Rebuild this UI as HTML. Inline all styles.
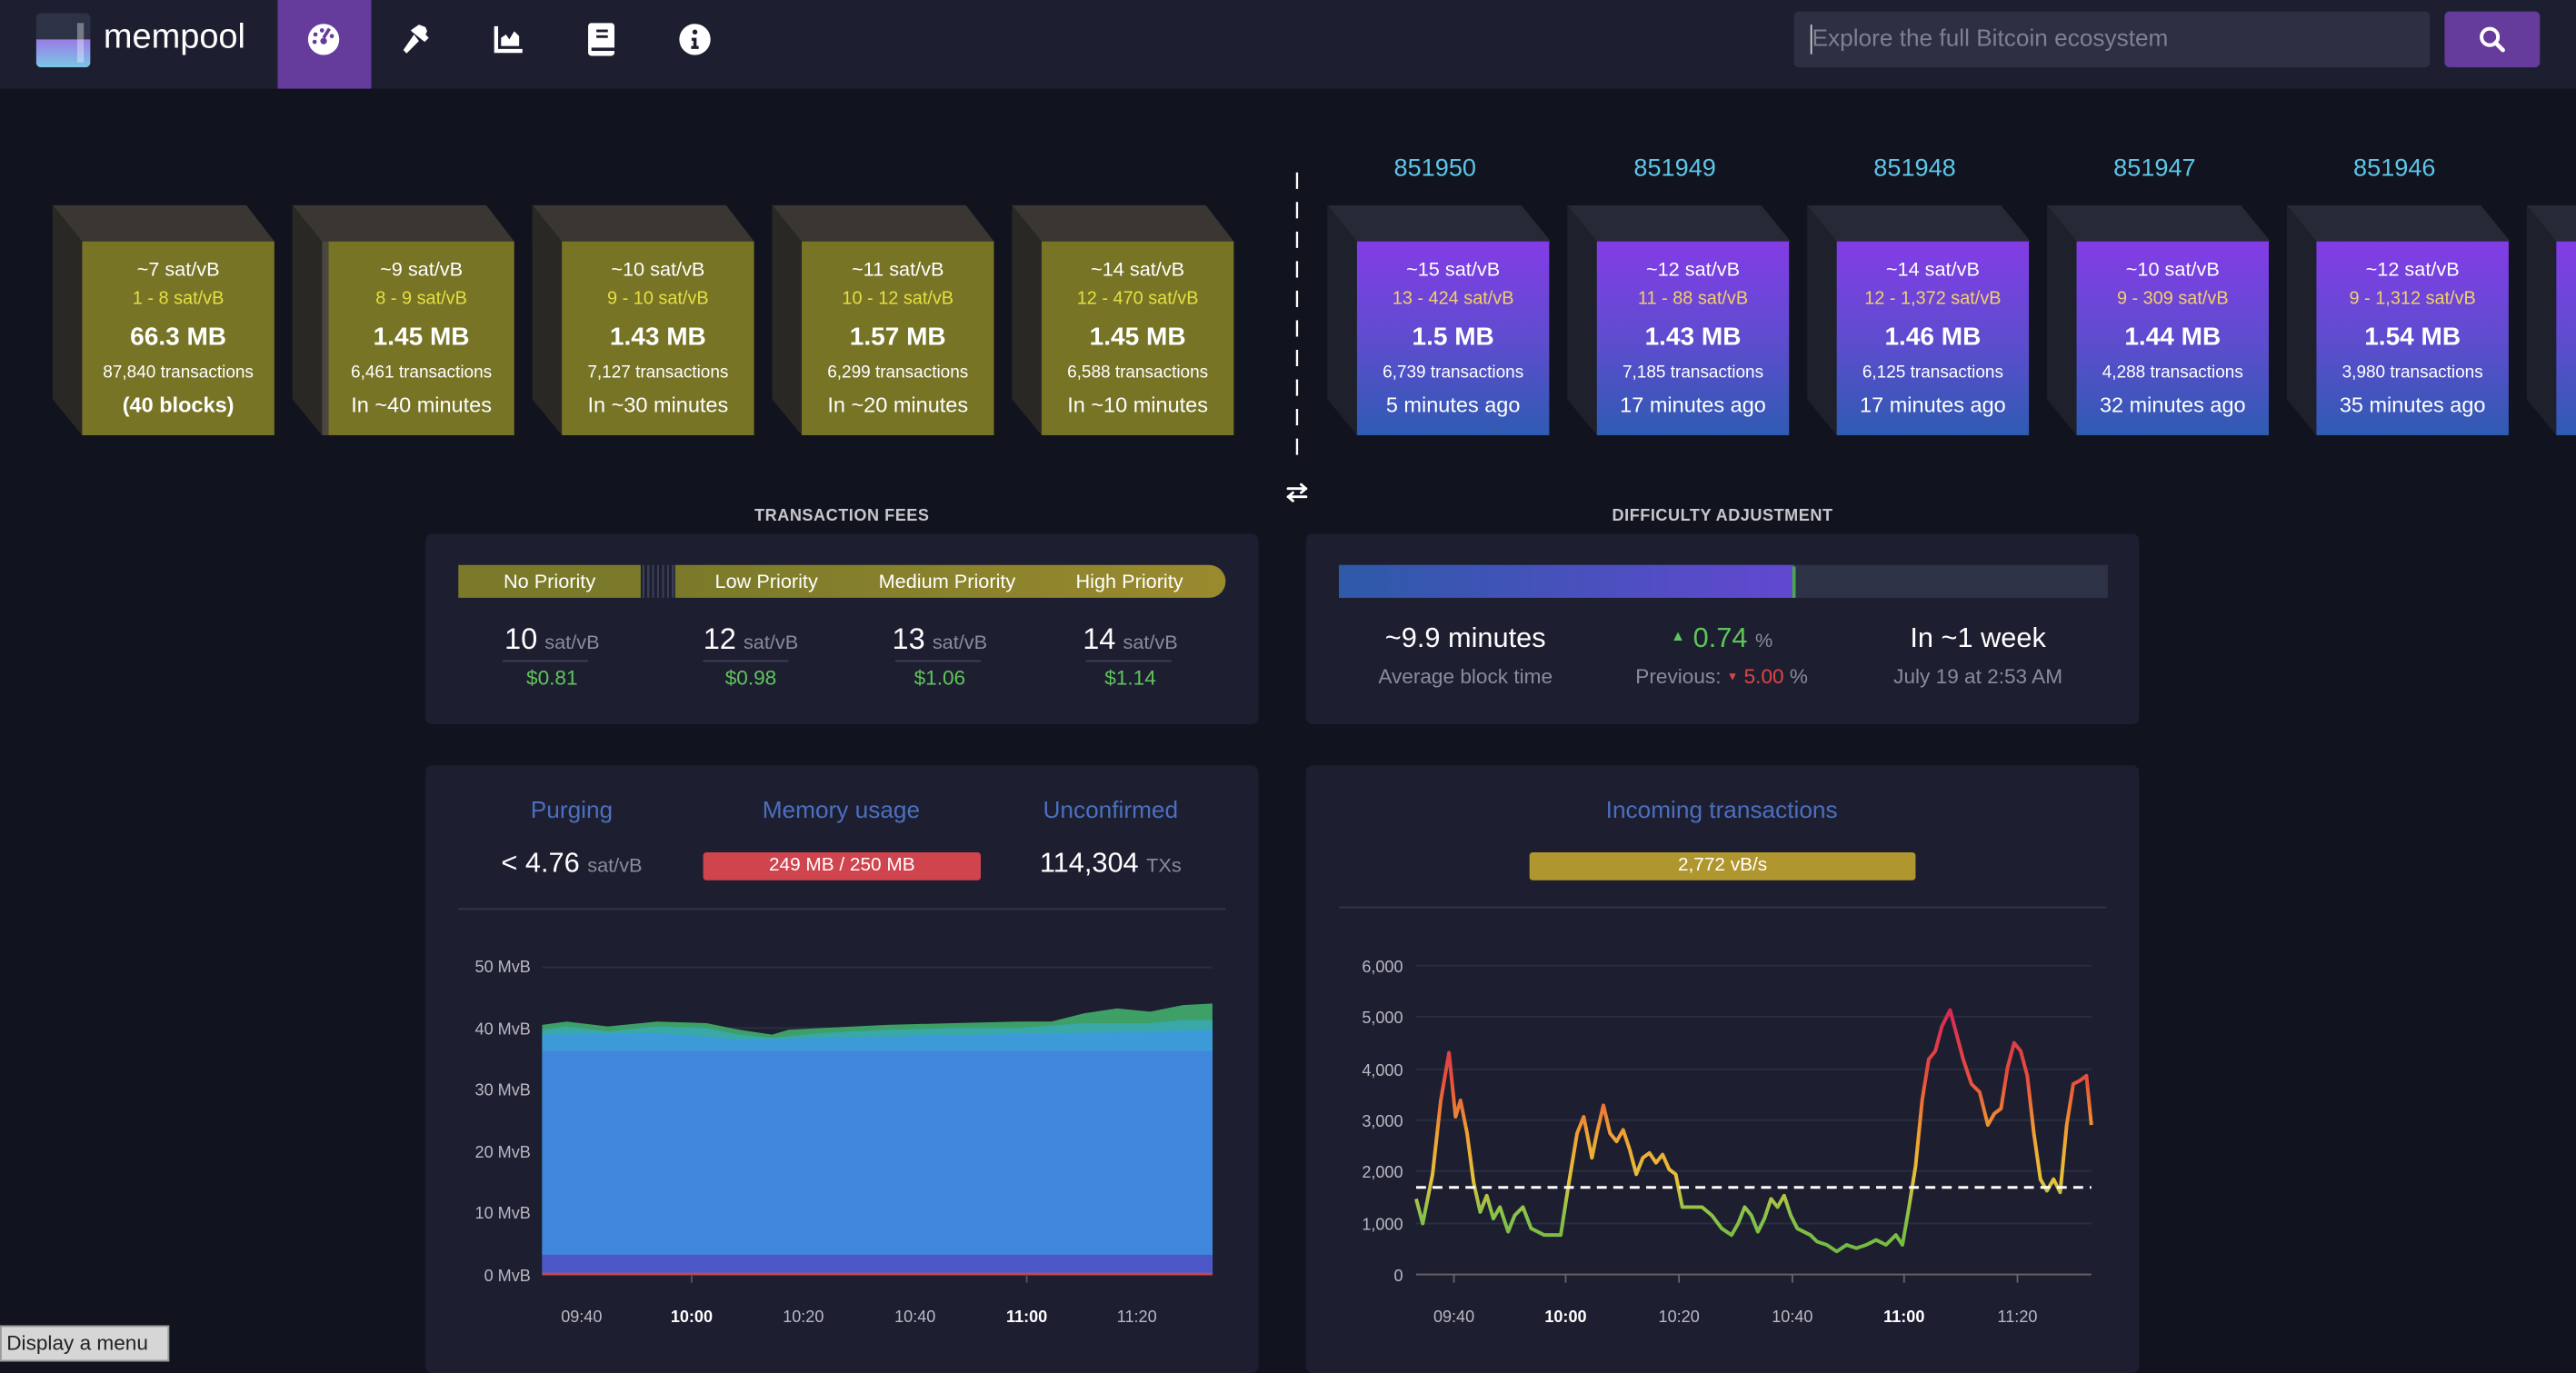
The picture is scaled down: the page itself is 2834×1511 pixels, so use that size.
<!DOCTYPE html>
<html><head><meta charset="utf-8"><style>
*{margin:0;padding:0;box-sizing:border-box}
html,body{width:2834px;height:1500px;overflow:hidden;background:#11131f;font-family:"Liberation Sans",sans-serif;color:#fff}
#w{position:absolute;left:0;top:0;width:1568px;height:830px;transform:scale(1.80740);transform-origin:0 0;background:#11131f}
.a{position:absolute}
.hdr{left:0;top:0;width:1568px;height:54px;background:#1d1f31}
.front{position:absolute;top:147px;width:117px;height:118px;text-align:center;color:#fff}
.mp{background:#777426}
.cf{background:linear-gradient(#833ce6,#5f4ccf 50%,#2f5bb2)}
.front div{position:absolute;left:0;width:100%;white-space:nowrap}
.l1{top:10px;font-size:12px}
.l2{top:29px;font-size:11px;color:#e6df42}
.cf .l2{color:#f2d06b}
.l3{top:50px;font-size:15.5px;font-weight:bold}
.l4{top:74px;font-size:10.5px}
.l5{top:92px;font-size:13px}
.num{position:absolute;top:94px;font-size:15px;color:#5dc6e8;width:117px;text-align:center}
.panel{position:absolute;background:#1d1f31;border-radius:4px}
.ttl{position:absolute;font-size:10px;color:#c7c8cc;font-weight:bold;letter-spacing:.3px;text-align:center}
.c{position:absolute;text-align:center;white-space:nowrap}
.ax{font-size:10px;fill:#b8b9c0;font-family:"Liberation Sans",sans-serif}
</style></head><body><div id="w">
<div class="a hdr"></div>
<svg class="a" style="left:22px;top:8px" width="33" height="33" viewBox="0 0 33 33"><defs><linearGradient id="lg" x1="0" y1="0" x2="0" y2="1"><stop offset="0" stop-color="#9a7be6"/><stop offset="1" stop-color="#7ac8e6"/></linearGradient></defs><rect width="33" height="33" rx="3" fill="#2e3247"/><path d="M0 16H33V30a3 3 0 0 1-3 3H3a3 3 0 0 1-3-3Z" fill="url(#lg)"/><rect x="25" y="6" width="4" height="24" fill="#fff" opacity=".35"/></svg>
<div class="a" style="left:63px;top:11px;font-size:21px;color:#fff">mempool</div>
<div class="a" style="left:169px;top:0;width:57px;height:54px;background:#653b9c"></div>
<svg class="a" style="left:187px;top:14px" width="20" height="20" viewBox="0 0 20 20"><circle cx="10" cy="10" r="9.5" fill="#fff"/><path d="M10 9L13.5 3.5" stroke="#653b9c" stroke-width="2"/><circle cx="10" cy="11" r="2" fill="#653b9c"/><circle cx="5" cy="7" r="1.3" fill="#653b9c"/><circle cx="9" cy="4.5" r="1.3" fill="#653b9c"/><circle cx="15" cy="8" r="1.3" fill="#653b9c"/><circle cx="4.5" cy="11.5" r="1.3" fill="#653b9c"/></svg>
<svg class="a" style="left:244px;top:14px" width="20" height="20" viewBox="0 0 20 20"><path d="M8 7L1.5 16.5l2 2L11 11Z" fill="#fff"/><path d="M6 4.5L11 1l4 1.5 1 2.5-1 2 2 2-2.5 2.5L7 5.5Z" fill="#fff"/></svg>
<svg class="a" style="left:300px;top:14px" width="20" height="20" viewBox="0 0 20 20"><path d="M2 2v15h16" stroke="#fff" stroke-width="2.4" fill="none"/><path d="M5 14V9l3-2 2 3 3-5 3 3v6Z" fill="#fff"/></svg>
<svg class="a" style="left:357px;top:14px" width="18" height="20" viewBox="0 0 18 20"><rect x="1" y="0" width="16" height="20" rx="2" fill="#fff"/><rect x="6" y="4" width="7" height="1.6" fill="#1d1f31"/><rect x="6" y="7.5" width="7" height="1.6" fill="#1d1f31"/><rect x="3" y="15" width="14" height="2" fill="#1d1f31"/></svg>
<svg class="a" style="left:413px;top:14px" width="20" height="20" viewBox="0 0 20 20"><circle cx="10" cy="10" r="9.5" fill="#fff"/><circle cx="10" cy="5.5" r="1.5" fill="#1d1f31"/><path d="M8 9h3v5h1.3v1.8H7.7V14H9v-3.2H8Z" fill="#1d1f31"/></svg>
<div class="a" style="left:1092px;top:7px;width:387px;height:34px;background:#2d3043;border-radius:3px"></div>
<div class="a" style="left:1103px;top:16px;font-size:14.5px;color:#7d8090">Explore the full Bitcoin ecosystem</div>
<div class="a" style="left:1102px;top:15px;width:1px;height:18px;background:#ccc"></div>
<div class="a" style="left:1488px;top:7px;width:58px;height:34px;background:#653b9c;border-radius:3px"></div>
<svg class="a" style="left:1509px;top:16px" width="16" height="16" viewBox="0 0 16 16"><circle cx="6.5" cy="6.5" r="5" stroke="#fff" stroke-width="2.2" fill="none"/><path d="M10 10l4.5 4.5" stroke="#fff" stroke-width="2.6" stroke-linecap="round"/></svg>

<svg class="a" style="left:0;top:0" width="1568" height="320">
<g fill="#3a3631"><polygon points="32,125 150,125 167,147 50,147"/><polygon points="178,125 296,125 313,147 196,147"/><polygon points="324,125 442,125 459,147 342,147"/><polygon points="470,125 588,125 605,147 488,147"/><polygon points="616,125 734,125 751,147 634,147"/></g>
<g fill="#2a2825"><polygon points="32,125 50,147 50,265 32,243"/><polygon points="178,125 196,147 196,265 178,243"/><polygon points="324,125 342,147 342,265 324,243"/><polygon points="470,125 488,147 488,265 470,243"/><polygon points="616,125 634,147 634,265 616,243"/></g>
<g fill="#262a37"><polygon points="808,125 926,125 944,147 826,147"/><polygon points="954,125 1072,125 1090,147 972,147"/><polygon points="1100,125 1218,125 1236,147 1118,147"/><polygon points="1246,125 1364,125 1382,147 1264,147"/><polygon points="1392,125 1510,125 1528,147 1410,147"/><polygon points="1538,125 1568,125 1568,147 1556,147"/></g>
<g fill="#1e212c"><polygon points="808,125 826,147 826,265 808,243"/><polygon points="954,125 972,147 972,265 954,243"/><polygon points="1100,125 1118,147 1118,265 1100,243"/><polygon points="1246,125 1264,147 1264,265 1246,243"/><polygon points="1392,125 1410,147 1410,265 1392,243"/><polygon points="1538,125 1556,147 1556,265 1538,243"/></g>
<line x1="789.5" y1="105" x2="789.5" y2="285" stroke="#fff" stroke-width="1.3" stroke-dasharray="10,8"/>
<g stroke="#fff" stroke-width="1.6" fill="none" stroke-linecap="round" stroke-linejoin="round"><path d="M784 297.5h11M792 295l2.8 2.5L792 300"/><path d="M795 302.5h-11M787 300l-2.8 2.5L787 305"/></g>
</svg>
<div class="a" style="left:196px;top:147px;width:4px;height:118px;background:#4a4640"></div>

<div class="front mp" style="left:50px"><div class="l1">~7 sat/vB</div><div class="l2">1 - 8 sat/vB</div><div class="l3">66.3 MB</div><div class="l4">87,840 transactions</div><div class="l5" style="font-weight:bold">(40 blocks)</div></div>
<div class="front mp" style="left:200px;width:113px"><div class="l1">~9 sat/vB</div><div class="l2">8 - 9 sat/vB</div><div class="l3">1.45 MB</div><div class="l4">6,461 transactions</div><div class="l5">In ~40 minutes</div></div>
<div class="front mp" style="left:342px"><div class="l1">~10 sat/vB</div><div class="l2">9 - 10 sat/vB</div><div class="l3">1.43 MB</div><div class="l4">7,127 transactions</div><div class="l5">In ~30 minutes</div></div>
<div class="front mp" style="left:488px"><div class="l1">~11 sat/vB</div><div class="l2">10 - 12 sat/vB</div><div class="l3">1.57 MB</div><div class="l4">6,299 transactions</div><div class="l5">In ~20 minutes</div></div>
<div class="front mp" style="left:634px"><div class="l1">~14 sat/vB</div><div class="l2">12 - 470 sat/vB</div><div class="l3">1.45 MB</div><div class="l4">6,588 transactions</div><div class="l5">In ~10 minutes</div></div>

<div class="num" style="left:815px">851950</div><div class="num" style="left:961px">851949</div><div class="num" style="left:1107px">851948</div><div class="num" style="left:1253px">851947</div><div class="num" style="left:1399px">851946</div>
<div class="front cf" style="left:826px"><div class="l1">~15 sat/vB</div><div class="l2">13 - 424 sat/vB</div><div class="l3">1.5 MB</div><div class="l4">6,739 transactions</div><div class="l5">5 minutes ago</div></div>
<div class="front cf" style="left:972px"><div class="l1">~12 sat/vB</div><div class="l2">11 - 88 sat/vB</div><div class="l3">1.43 MB</div><div class="l4">7,185 transactions</div><div class="l5">17 minutes ago</div></div>
<div class="front cf" style="left:1118px"><div class="l1">~14 sat/vB</div><div class="l2">12 - 1,372 sat/vB</div><div class="l3">1.46 MB</div><div class="l4">6,125 transactions</div><div class="l5">17 minutes ago</div></div>
<div class="front cf" style="left:1264px"><div class="l1">~10 sat/vB</div><div class="l2">9 - 309 sat/vB</div><div class="l3">1.44 MB</div><div class="l4">4,288 transactions</div><div class="l5">32 minutes ago</div></div>
<div class="front cf" style="left:1410px"><div class="l1">~12 sat/vB</div><div class="l2">9 - 1,312 sat/vB</div><div class="l3">1.54 MB</div><div class="l4">3,980 transactions</div><div class="l5">35 minutes ago</div></div>
<div class="front cf" style="left:1556px;width:12px"></div>

<div class="ttl" style="left:259px;top:309px;width:507px">TRANSACTION FEES</div>
<div class="panel" style="left:259px;top:325px;width:507px;height:116px"></div>
<div class="a" style="left:279px;top:344px;width:111px;height:20px;background:#7a7a2a;font-size:12px;text-align:center;line-height:20px">No Priority</div>
<div class="a" style="left:391px;top:344px;width:20px;height:20px;background:repeating-linear-gradient(90deg,#3a3e55 0 1.2px,#1d1f31 1.2px 3px)"></div>
<div class="a" style="left:411px;top:344px;width:335px;height:20px;background:linear-gradient(90deg,#7a7a2a,#9a8a2e);border-radius:0 10px 10px 0;font-size:12px;line-height:20px"><span class="a" style="left:0;width:111px;text-align:center">Low Priority</span><span class="a" style="left:110px;width:111px;text-align:center">Medium Priority</span><span class="a" style="left:221px;width:111px;text-align:center">High Priority</span></div>
<div class="c" style="left:286px;top:379px;width:100px"><span style="font-size:18px">10</span> <span style="font-size:12px;color:#8a8c99">sat/vB</span></div>
<div class="c" style="left:407px;top:379px;width:100px"><span style="font-size:18px">12</span> <span style="font-size:12px;color:#8a8c99">sat/vB</span></div>
<div class="c" style="left:522px;top:379px;width:100px"><span style="font-size:18px">13</span> <span style="font-size:12px;color:#8a8c99">sat/vB</span></div>
<div class="c" style="left:638px;top:379px;width:100px"><span style="font-size:18px">14</span> <span style="font-size:12px;color:#8a8c99">sat/vB</span></div>
<div class="a" style="left:306px;top:402px;width:52px;height:1px;background:#3e4155"></div><div class="a" style="left:428px;top:402px;width:52px;height:1px;background:#3e4155"></div><div class="a" style="left:545px;top:402px;width:52px;height:1px;background:#3e4155"></div><div class="a" style="left:661px;top:402px;width:52px;height:1px;background:#3e4155"></div>
<div class="c" style="left:286px;top:406px;width:100px;font-size:12.5px;color:#5fc55a">$0.81</div>
<div class="c" style="left:407px;top:406px;width:100px;font-size:12.5px;color:#5fc55a">$0.98</div>
<div class="c" style="left:522px;top:406px;width:100px;font-size:12.5px;color:#5fc55a">$1.06</div>
<div class="c" style="left:638px;top:406px;width:100px;font-size:12.5px;color:#5fc55a">$1.14</div>

<div class="ttl" style="left:795px;top:309px;width:507px">DIFFICULTY ADJUSTMENT</div>
<div class="panel" style="left:795px;top:325px;width:507px;height:116px"></div>
<div class="a" style="left:815px;top:344px;width:468px;height:20px;background:#2d3246"></div>
<div class="a" style="left:815px;top:344px;width:277px;height:20px;background:linear-gradient(90deg,#2d5aa8,#6248d0)"></div>
<div class="a" style="left:1091px;top:345px;width:2px;height:19px;background:#4aa84a"></div>
<div class="c" style="left:832px;top:379px;width:120px;font-size:17px">~9.9 minutes</div>
<div class="c" style="left:822px;top:405px;width:140px;font-size:12.5px;color:#8a8c99">Average block time</div>
<div class="c" style="left:988px;top:379px;width:120px;font-size:17px"><span style="font-size:9px;color:#5fc55a;vertical-align:4px">▲</span> <span style="color:#5fc55a">0.74</span> <span style="font-size:12px;color:#8a8c99">%</span></div>
<div class="c" style="left:978px;top:405px;width:140px;font-size:12.5px;color:#8a8c99">Previous: <span style="font-size:7px;color:#e04545;vertical-align:2px">▼</span> <span style="color:#e04545">5.00</span> %</div>
<div class="c" style="left:1144px;top:379px;width:120px;font-size:17px">In ~1 week</div>
<div class="c" style="left:1134px;top:405px;width:140px;font-size:12.5px;color:#8a8c99">July 19 at 2:53 AM</div>

<div class="panel" style="left:259px;top:466px;width:507px;height:370px"></div>
<div class="c" style="left:298px;top:486px;width:100px;font-size:14.5px;color:#4b6fbf">Purging</div>
<div class="c" style="left:442px;top:486px;width:140px;font-size:14.5px;color:#4b6fbf">Memory usage</div>
<div class="c" style="left:616px;top:486px;width:120px;font-size:14.5px;color:#4b6fbf">Unconfirmed</div>
<div class="c" style="left:288px;top:516px;width:120px;font-size:17px">&lt; 4.76 <span style="font-size:12px;color:#8a8c99">sat/vB</span></div>
<div class="c" style="left:428px;top:519px;width:169px;height:17px;background:#d0444e;border-radius:2px;font-size:11.5px;line-height:17px">249 MB / 250 MB</div>
<div class="c" style="left:616px;top:516px;width:120px;font-size:17px">114,304 <span style="font-size:12px;color:#8a8c99">TXs</span></div>
<div class="a" style="left:279px;top:553px;width:467px;height:1px;background:#33364a"></div>
<svg class="a" style="left:259px;top:570px" width="507" height="250" viewBox="259 570 507 250">
<g stroke="#2b2e42" stroke-width="1"><line x1="330" y1="589" x2="738" y2="589"/><line x1="330" y1="626" x2="738" y2="626"/><line x1="330" y1="664" x2="738" y2="664"/><line x1="330" y1="701" x2="738" y2="701"/><line x1="330" y1="739" x2="738" y2="739"/></g>
<g class="ax" text-anchor="end"><text x="323" y="592">50 MvB</text><text x="323" y="630">40 MvB</text><text x="323" y="667">30 MvB</text><text x="323" y="705">20 MvB</text><text x="323" y="742">10 MvB</text><text x="323" y="780">0 MvB</text></g>
<path d="M330 624L345 622 370 625 400 622 430 623 450 627 470 630 480 627 500 626 540 624 580 623 620 622 640 622 660 617 680 614 700 616 720 612 738 611V776H330Z" fill="#3ea066"/>
<path d="M330 627L345 625 370 628 400 625 430 626 450 630 470 632 500 629 540 627 580 626 620 626 660 623 700 623 720 621 738 621V776H330Z" fill="#38a8a8"/>
<path d="M330 630L400 629 450 633 500 632 600 630 700 628 738 627V776H330Z" fill="#3d9ad9"/>
<rect x="330" y="640" width="408" height="124" fill="#3f86dc"/>
<rect x="330" y="764" width="408" height="11" fill="#4b57c6"/>
<rect x="330" y="775" width="408" height="1.5" fill="#d0444e"/>
<g class="ax" text-anchor="middle"><text x="354" y="805">09:40</text><text x="421" y="805" font-weight="bold" fill="#fff">10:00</text><text x="489" y="805">10:20</text><text x="557" y="805">10:40</text><text x="625" y="805" font-weight="bold" fill="#fff">11:00</text><text x="692" y="805">11:20</text></g>
<g stroke="#555" stroke-width="1"><line x1="421" y1="776" x2="421" y2="781"/><line x1="625" y1="776" x2="625" y2="781"/></g>
</svg>

<div class="panel" style="left:795px;top:466px;width:507px;height:370px"></div>
<div class="c" style="left:948px;top:486px;width:200px;font-size:14.5px;color:#4b6fbf">Incoming transactions</div>
<div class="c" style="left:931px;top:519px;width:235px;height:17px;background:#b0962e;border-radius:2px;font-size:11.5px;line-height:17px">2,772 vB/s</div>
<div class="a" style="left:815px;top:552px;width:467px;height:1px;background:#33364a"></div>
<svg class="a" style="left:795px;top:570px" width="507" height="250" viewBox="795 570 507 250">
<defs><linearGradient id="ig" gradientUnits="userSpaceOnUse" x1="0" y1="610" x2="0" y2="770"><stop offset="0" stop-color="#d6245a"/><stop offset=".3" stop-color="#e8503a"/><stop offset=".5" stop-color="#f0a030"/><stop offset=".68" stop-color="#e6c23a"/><stop offset=".8" stop-color="#8cc34a"/><stop offset="1" stop-color="#6ab53e"/></linearGradient></defs>
<g stroke="#2b2e42" stroke-width="1"><line x1="862" y1="588" x2="1273" y2="588"/><line x1="862" y1="619" x2="1273" y2="619"/><line x1="862" y1="651" x2="1273" y2="651"/><line x1="862" y1="682" x2="1273" y2="682"/><line x1="862" y1="713" x2="1273" y2="713"/><line x1="862" y1="745" x2="1273" y2="745"/></g>
<line x1="862" y1="776" x2="1273" y2="776" stroke="#666" stroke-width="1"/>
<g class="ax" text-anchor="end"><text x="854" y="592">6,000</text><text x="854" y="623">5,000</text><text x="854" y="655">4,000</text><text x="854" y="686">3,000</text><text x="854" y="717">2,000</text><text x="854" y="749">1,000</text><text x="854" y="780">0</text></g>
<polyline fill="none" stroke="url(#ig)" stroke-width="2.2" stroke-linejoin="round" points="862,730 866,745 872,715 877,670 882,641 886,680 889,670 893,690 897,720 901,738 905,728 909,742 913,735 918,750 922,740 927,735 932,748 940,752 950,752 955,720 960,690 964,680 969,705 972,690 976,673 980,690 984,695 988,688 992,700 996,715 1000,705 1004,702 1008,708 1012,703 1016,712 1020,715 1024,735 1030,735 1036,735 1042,740 1048,748 1054,752 1058,745 1062,735 1066,740 1070,750 1074,742 1078,730 1082,735 1086,728 1090,740 1094,748 1098,750 1102,752 1106,756 1112,758 1118,762 1124,758 1130,760 1136,758 1142,755 1148,758 1154,752 1158,758 1162,735 1166,710 1170,670 1174,645 1178,640 1182,625 1187,615 1191,630 1195,645 1200,660 1205,665 1210,685 1214,678 1218,675 1222,650 1226,635 1230,640 1234,655 1238,690 1242,718 1246,725 1250,718 1254,726 1258,685 1262,660 1266,658 1270,655 1273,685"/>
<line x1="862" y1="723" x2="1273" y2="723" stroke="#fff" stroke-width="1.6" stroke-dasharray="6,4"/>
<g class="ax" text-anchor="middle"><text x="885" y="805">09:40</text><text x="953" y="805" font-weight="bold" fill="#fff">10:00</text><text x="1022" y="805">10:20</text><text x="1091" y="805">10:40</text><text x="1159" y="805" font-weight="bold" fill="#fff">11:00</text><text x="1228" y="805">11:20</text></g>
<g stroke="#666" stroke-width="1"><line x1="885" y1="776" x2="885" y2="781"/><line x1="953" y1="776" x2="953" y2="781"/><line x1="1022" y1="776" x2="1022" y2="781"/><line x1="1091" y1="776" x2="1091" y2="781"/><line x1="1159" y1="776" x2="1159" y2="781"/><line x1="1228" y1="776" x2="1228" y2="781"/></g>
</svg>

<div class="a" style="left:0;top:807px;width:103px;height:22px;background:#d6d6d6;border:1px solid #999;color:#222;font-size:12.5px;line-height:20px;padding-left:3px">Display a menu</div>
</div></body></html>
